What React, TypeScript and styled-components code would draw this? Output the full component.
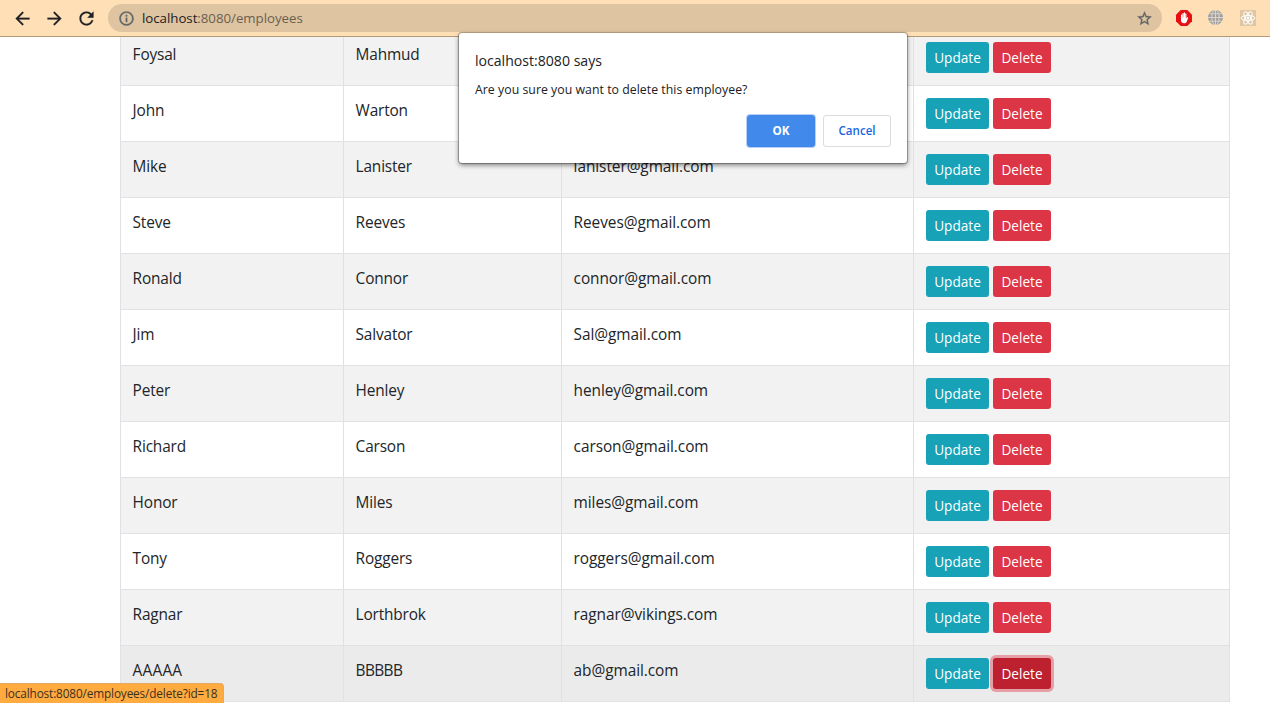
import React from 'react';
import styled, { createGlobalStyle, css } from 'styled-components';

const GlobalStyle = createGlobalStyle`
  * { box-sizing: border-box; }
  body {
    margin: 0;
    background: #fff;
    color: #212529;
    font-family: 'Open Sans', 'Noto Sans', sans-serif;
    overflow: hidden;
  }
`;

const Window = styled.div`
  position: relative;
  display: flex;
  flex-direction: column;
  width: 1270px;
  height: 703px;
  overflow: hidden;
`;

const Toolbar = styled.header`
  display: flex;
  flex: none;
  align-items: center;
  height: 37px;
  padding: 0 14px 0 11.5px;
  background: #ffdfb6;
  border-bottom: 1px solid #b49a7a;
`;

const NavIcon = styled.svg`
  flex: none;
  width: 21px;
  height: 21px;
  margin-right: 11px;
  fill: #202124;
  stroke: #202124;
  stroke-width: 0.2;
`;

const AddressBar = styled.div`
  display: flex;
  flex: none;
  align-items: center;
  width: 1054px;
  height: 28px;
  margin-left: 0.5px;
  padding: 0 9.5px;
  border-radius: 14px;
  background: #dec4a0;
  color: #6a5f50;
  font-size: 13.3px;
  letter-spacing: -0.04px;
`;

const BarIcon = styled.svg`
  flex: none;
  width: 17px;
  height: 17px;
  fill: #5f6368;
  stroke: #5f6368;
  stroke-width: 0.4;
`;

const Address = styled.span`
  flex: 1;
  margin-left: 7.5px;
  line-height: 20px;
`;

const Host = styled.span`
  color: #202124;
`;

const Extensions = styled.div`
  display: flex;
  align-items: center;
  gap: 16px;
  margin-left: 14px;
`;

const ExtensionIcon = styled.svg`
  width: 16px;
  height: 16px;
`;

const Viewport = styled.main`
  display: flex;
  flex: 1;
  min-height: 0;
  flex-direction: column;
  justify-content: flex-end;
  padding: 0 40px 1px 120px;
  overflow: hidden;
`;

const Row = styled.div<{ $striped: boolean; $hovered: boolean }>`
  display: grid;
  flex: none;
  grid-template-columns: 224px 218px 352px 316px;
  height: 56px;
  background: ${p => (p.$hovered ? '#ebebeb' : p.$striped ? '#f2f2f2' : '#fff')};
  border-bottom: 1px solid #dee2e6;
`;

const Cell = styled.div`
  padding: 12px;
  border-right: 1px solid #dee2e6;

  &:first-child {
    border-left: 1px solid #dee2e6;
  }
`;

const TextCell = styled(Cell)<{ $tracking?: number }>`
  padding: 12px 12px 12px 11.6px;
  font-size: 15.4px;
  line-height: 25px;
  letter-spacing: ${p => p.$tracking ?? -0.16}px;
  white-space: nowrap;
`;

const Actions = styled(Cell)`
  display: flex;
  align-items: flex-start;
  gap: 4px;
`;

const ActionButton = styled.button<{ $danger?: boolean; $pressed?: boolean }>`
  width: ${p => (p.$danger ? 58 : 63)}px;
  height: 31px;
  padding: 0;
  border: 0;
  border-radius: 3px;
  background: ${p => (p.$danger ? '#dc3545' : '#17a2b8')};
  color: #fff;
  font: 13.6px/21px 'Open Sans', sans-serif;
  text-align: center;
  ${p =>
    p.$pressed &&
    css`
      background: #bd2130;
      box-shadow: 0 0 0 3px rgba(225, 83, 97, 0.5);
    `}
`;

const Dialog = styled.section`
  position: absolute;
  top: 33px;
  left: 459px;
  display: flex;
  flex-direction: column;
  width: 448px;
  height: 130px;
  padding: 16px;
  border-radius: 3px;
  background: #fff;
  box-shadow: 0 0 0 1px rgba(0, 0, 0, 0.25), 0 2px 5px rgba(0, 0, 0, 0.5);
`;

const DialogTitle = styled.h1`
  margin: 0;
  color: #202124;
  font-size: 14.1px;
  font-weight: 400;
  line-height: 24px;
`;

const DialogMessage = styled.p`
  margin: 7px 0 0;
  color: #202124;
  font-size: 12.3px;
  letter-spacing: 0.03px;
  line-height: 20px;
`;

const DialogActions = styled.div`
  display: flex;
  justify-content: flex-end;
  gap: 8px;
  margin-top: 15px;
`;

const DialogButton = styled.button<{ $primary?: boolean }>`
  width: 68px;
  height: 32px;
  padding: 0;
  border: 1px solid ${p => (p.$primary ? '#4285e8' : '#dadce0')};
  border-radius: 3px;
  background: ${p => (p.$primary ? '#4189eb' : '#fff')};
  box-shadow: ${p => (p.$primary ? '0 0 0 1px #b4d2fa' : 'none')};
  color: ${p => (p.$primary ? '#fff' : '#1a66e0')};
  font: ${p => (p.$primary ? 700 : 600)} 11.6px/20px 'Open Sans', sans-serif;
`;

const StatusBubble = styled.div`
  position: absolute;
  bottom: 0;
  left: 0;
  width: 224px;
  height: 20px;
  padding-left: 5px;
  border-top: 1px solid #e5a960;
  border-right: 1px solid #e5a960;
  border-top-right-radius: 4px;
  background: #ffab40;
  color: #3c3020;
  font-size: 11.8px;
  letter-spacing: -0.14px;
  line-height: 18px;
  white-space: nowrap;
`;

const employees = [
  ['Foysal', 'Mahmud', ''],
  ['John', 'Warton', ''],
  ['Mike', 'Lanister', 'lanister@gmail.com'],
  ['Steve', 'Reeves', 'Reeves@gmail.com'],
  ['Ronald', 'Connor', 'connor@gmail.com'],
  ['Jim', 'Salvator', 'Sal@gmail.com'],
  ['Peter', 'Henley', 'henley@gmail.com'],
  ['Richard', 'Carson', 'carson@gmail.com'],
  ['Honor', 'Miles', 'miles@gmail.com'],
  ['Tony', 'Roggers', 'roggers@gmail.com'],
  ['Ragnar', 'Lorthbrok', 'ragnar@vikings.com'],
  ['AAAAA', 'BBBBB', 'ab@gmail.com'],
];

const BlockerIcon = () => (
  <ExtensionIcon viewBox="0 0 16 16">
    <path d="M4.7 0h6.6L16 4.7v6.6L11.3 16H4.7L0 11.3V4.7z" fill="#e60f14" />
    <path
      d="M5 10.3V5.1c0-.8 1.2-.8 1.2 0v2.5h.2V3.5c0-.8 1.2-.8 1.2 0v3.8h.2V2.900c0-.8 1.2-.8 1.2 0v4.4h.2V3.8c0-.8 1.2-.8 1.2 0v4.8l.6-1c.4-.6 1.4-.3 1.1.4l-1.3 3.4c-.5 1.2-1.3 1.9-2.7 1.9-1.9 0-3.1-1.100-3.1-3z"
      fill="#fff"
    />
  </ExtensionIcon>
);

const GlobeIcon = () => (
  <ExtensionIcon viewBox="0 0 16 16">
    <circle cx="7.5" cy="7.5" r="7.5" fill="#9da1a6" />
    <g fill="none" stroke="#e8d8c2" strokeWidth="0.9">
      <path d="M7.5 0v15M0 7.5h15M1.300 3.8h12.4M1.3 11.2h12.4" />
      <ellipse cx="7.5" cy="7.5" rx="3.7" ry="7.5" />
    </g>
  </ExtensionIcon>
);

const AtomIcon = () => (
  <ExtensionIcon viewBox="0 0 16 16">
    <rect width="16" height="16" fill="#dfc7a6" />
    <g fill="none" stroke="#fff" strokeWidth="1">
      <ellipse cx="8" cy="8" rx="6.8" ry="2.6" />
      <ellipse cx="8" cy="8" rx="6.8" ry="2.6" transform="rotate(60 8 8)" />
      <ellipse cx="8" cy="8" rx="6.8" ry="2.6" transform="rotate(120 8 8)" />
    </g>
    <circle cx="8" cy="8" r="1.4" fill="#fff" />
  </ExtensionIcon>
);

export default function App() {
  return (
    <Window>
      <GlobalStyle />
      <Toolbar>
        <NavIcon viewBox="0 0 24 24">
          <path d="M20 11H7.83l5.59-5.59L12 4l-8 8 8 8 1.41-1.41L7.83 13H20v-2z" />
        </NavIcon>
        <NavIcon viewBox="0 0 24 24">
          <path d="M12 4l-1.41 1.41L16.17 11H4v2h12.17l-5.58 5.59L12 20l8-8z" />
        </NavIcon>
        <NavIcon viewBox="0 0 24 24">
          <path d="M17.65 6.35C16.2 4.9 14.21 4 12 4c-4.42 0-7.99 3.58-7.99 8s3.57 8 7.99 8c3.73 0 6.84-2.55 7.73-6h-2.08c-.82 2.33-3.04 4-5.65 4-3.31 0-6-2.69-6-6s2.69-6 6-6c1.66 0 3.14.69 4.22 1.78L13 11h7V4l-2.35 2.35z" />
        </NavIcon>
        <AddressBar>
          <BarIcon viewBox="0 0 24 24">
            <path d="M11 17h2v-6h-2v6zm1-15C6.48 2 2 6.48 2 12s4.48 10 10 10 10-4.48 10-10S17.52 2 12 2zm0 18c-4.41 0-8-3.59-8-8s3.59-8 8-8 8 3.59 8 8-3.59 8-8 8zM11 9h2V7h-2v2z" />
          </BarIcon>
          <Address>
            <Host>localhost</Host>:8080/employees
          </Address>
          <BarIcon viewBox="0 0 24 24">
            <path d="M22 9.24l-7.19-.62L12 2 9.19 8.63 2 9.24l5.46 4.73L5.82 21 12 17.27 18.18 21l-1.63-7.03L22 9.24zM12 15.4l-3.76 2.27 1-4.28-3.32-2.88 4.38-.38L12 6.1l1.71 4.04 4.38.38-3.32 2.88 1 4.28L12 15.4z" />
          </BarIcon>
        </AddressBar>
        <Extensions>
          <BlockerIcon />
          <GlobeIcon />
          <AtomIcon />
        </Extensions>
      </Toolbar>

      <Viewport>
        {employees.map(([first, last, email], i) => {
          const isLast = i === employees.length - 1;
          return (
            <Row key={first} $striped={i % 2 === 0} $hovered={isLast}>
              <TextCell $tracking={isLast ? 0.2 : undefined}>{first}</TextCell>
              <TextCell $tracking={isLast ? -0.6 : undefined}>{last}</TextCell>
              <TextCell $tracking={-0.06}>{email}</TextCell>
              <Actions>
                <ActionButton>Update</ActionButton>
                <ActionButton $danger $pressed={isLast}>
                  Delete
                </ActionButton>
              </Actions>
            </Row>
          );
        })}
      </Viewport>

      <Dialog>
        <DialogTitle>localhost:8080 says</DialogTitle>
        <DialogMessage>Are you sure you want to delete this employee?</DialogMessage>
        <DialogActions>
          <DialogButton $primary>OK</DialogButton>
          <DialogButton>Cancel</DialogButton>
        </DialogActions>
      </Dialog>

      <StatusBubble>localhost:8080/employees/delete?id=18</StatusBubble>
    </Window>
  );
}
